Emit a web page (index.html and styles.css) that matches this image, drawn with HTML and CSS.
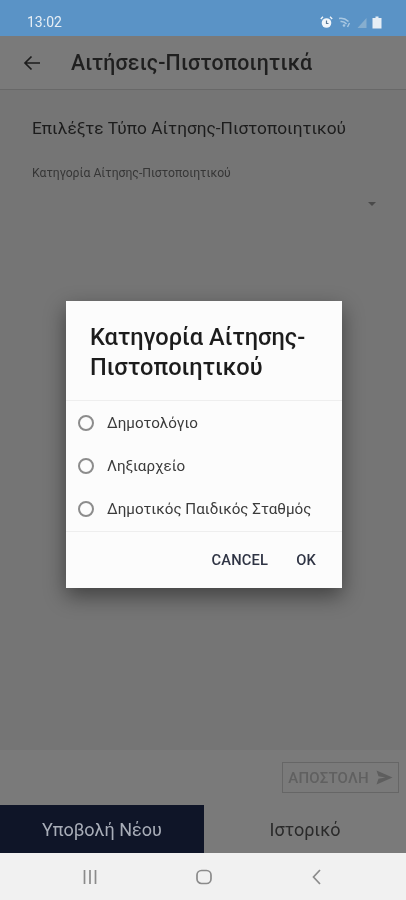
FILE: index.html
```html
<!DOCTYPE html>
<html lang="el">
<head>
    <meta charset="UTF-8">
    <meta name="viewport" content="width=device-width, initial-scale=1.0">
    <title>Αιτήσεις-Πιστοποιητικά</title>
    <link rel="stylesheet" href="styles.css">
</head>
<body>

    <!-- Status bar -->
    <div class="status-bar">
        <span class="status-time">13:02</span>
        <div class="status-icons">
            <svg width="13" height="13" viewBox="0 0 13 13"><circle cx="6.5" cy="7" r="4.8" fill="#f2f6fa"/><path d="M6.5 4.5V7.5H8.5" stroke="#5b7a96" stroke-width="1.2" fill="none"/><path d="M0.8 3L3 0.8M12.2 3L10 0.8" stroke="#f2f6fa" stroke-width="1.4"/></svg>
            <svg width="14" height="13" viewBox="0 0 14 13"><path d="M1 2.5Q6 1.5 10.5 5.5M2.5 5.5Q6 5 8.5 8" stroke="#a9c8e2" stroke-width="1.6" fill="none"/><circle cx="6" cy="9.5" r="1.3" fill="#a9c8e2"/><path d="M11.5 7L9.5 11" stroke="#a9c8e2" stroke-width="1.4"/></svg>
            <svg width="10" height="13" viewBox="0 0 10 13"><path d="M9.5 2V12H0.5Z" fill="#86aecf"/></svg>
            <svg width="10" height="13" viewBox="0 0 10 13"><path d="M3.5 0.5H6.5V2H9.5V12.5H0.5V2H3.5Z" fill="#e6eef5"/></svg>
        </div>
    </div>

    <div class="app">
        <!-- Toolbar -->
        <header class="toolbar">
            <svg class="back-icon" width="20" height="20" viewBox="0 0 20 20"><path d="M18 10H3M9.5 3.5L3 10L9.5 16.5" stroke="#1d1d1d" stroke-width="1.7" fill="none"/></svg>
            <h1>Αιτήσεις-Πιστοποιητικά</h1>
        </header>

        <!-- Form -->
        <main class="content">
            <h2>Επιλέξτε Τύπο Αίτησης-Πιστοποιητικού</h2>
            <label class="field-label">Κατηγορία Αίτησης-Πιστοποιητικού</label>
            <div class="select-row"><span class="select-arrow"></span></div>
        </main>

        <div class="send-bar">
            <div class="send-btn">
                <span>ΑΠΟΣΤΟΛΗ</span>
                <svg width="17" height="15" viewBox="0 0 17 15"><path d="M0.5 0.5L16.5 7.5L0.5 14.5L2.5 8.8L9.5 7.5L2.5 6.2Z" fill="#5e5e5e"/></svg>
            </div>
        </div>

        <!-- Tabs -->
        <div class="tabs">
            <div class="tab tab-active">Υποβολή Νέου</div>
            <div class="tab">Ιστορικό</div>
        </div>

        <!-- Dialog -->
        <div class="dialog-layer">
            <div class="dialog">
                <div class="dialog-title">Κατηγορία Αίτησης-Πιστοποιητικού</div>
                <div class="dialog-list">
                    <div class="radio-row"><span class="radio"></span>Δημοτολόγιο</div>
                    <div class="radio-row"><span class="radio"></span>Ληξιαρχείο</div>
                    <div class="radio-row"><span class="radio"></span>Δημοτικός Παιδικός Σταθμός</div>
                </div>
                <div class="dialog-actions">
                    <span>CANCEL</span>
                    <span>OK</span>
                </div>
            </div>
        </div>
    </div>

    <!-- System navigation -->
    <div class="sys-nav">
        <svg width="16" height="16" viewBox="0 0 16 16"><path d="M2.5 1V15M8 1V15M13.5 1V15" stroke="#8b8b8b" stroke-width="1.7"/></svg>
        <svg width="16" height="16" viewBox="0 0 16 16"><rect x="1" y="1.5" width="14" height="13" rx="4.5" stroke="#8b8b8b" stroke-width="1.7" fill="none"/></svg>
        <svg width="16" height="16" viewBox="0 0 16 16"><path d="M11 1L4.5 8L11 15" stroke="#8b8b8b" stroke-width="1.7" fill="none"/></svg>
    </div>

</body>
</html>
```

FILE: styles.css
```css
* {
    box-sizing: border-box;
}
html {
    background-color: #757575;
}
body {
    font-family: 'Roboto', 'Noto Sans', sans-serif;
    margin: 0;
    width: 406px;
    height: 900px;
    display: flex;
    flex-direction: column;
    overflow: hidden;
    background-color: #757575;
    filter: blur(0.6px); /* the reference is a soft, upscaled capture */
}
.status-bar {
    height: 36px;
    flex: none;
    background-color: #5a93c6;
    display: flex;
    align-items: center;
    justify-content: space-between;
    padding: 14px 24px 6px 27px;
    color: #e6eef5;
    font-size: 14px;
}
.status-icons {
    display: flex;
    align-items: center;
    gap: 5px;
}
.app {
    flex: 1;
    position: relative;
    display: flex;
    flex-direction: column;
    min-height: 0;
}
.toolbar {
    height: 54px;
    flex: none;
    display: flex;
    align-items: center;
    padding-left: 22px;
    background-color: #7a7a7a;
    border-bottom: 1px solid #686868;
}
.toolbar h1 {
    margin: 0 0 0 29px;
    font-size: 21.3px;
    font-weight: 500;
    color: #1f1f1f;
    letter-spacing: 0.2px;
}
.content {
    flex: 1;
    padding: 28px 32px 0;
}
.content h2 {
    margin: 0;
    font-size: 17.3px;
    font-weight: 400;
    color: #1c1c1c;
}
.field-label {
    display: block;
    margin-top: 28px;
    font-size: 12.2px;
    color: #363636;
}
.select-row {
    display: flex;
    justify-content: flex-end;
    padding: 22px 0 0;
    margin-right: -2px;
}
.select-arrow {
    width: 0;
    height: 0;
    border-left: 4px solid transparent;
    border-right: 4px solid transparent;
    border-top: 4px solid #4a4a4a;
}
.send-bar {
    height: 55px;
    flex: none;
    display: flex;
    align-items: flex-start;
    justify-content: flex-end;
    padding: 12px 7px 0 0;
    background-color: #7a7a7a;
}
.send-btn {
    width: 117px;
    height: 31px;
    border: 1px solid #666;
    display: flex;
    align-items: center;
    justify-content: center;
    gap: 7px;
    font-size: 15px;
    font-weight: 500;
    color: #606060;
    letter-spacing: 0.2px;
}
.tabs {
    height: 48px;
    flex: none;
    display: flex;
    background-color: #7a7a7a;
}
.tab {
    flex: 1;
    display: flex;
    align-items: center;
    justify-content: center;
    font-size: 18px;
    color: #2a2a2a;
}
.tab-active {
    flex: none;
    width: 204px;
    background-color: #0f1528;
    color: #a8adb8;
}
.dialog-layer {
    position: absolute;
    inset: 0;
    display: flex;
    align-items: center;
    justify-content: center;
}
.dialog {
    width: 276px;
    height: 287px;
    background-color: #fcfcfc;
    box-shadow: 0 8px 20px rgba(0, 0, 0, 0.45);
    display: flex;
    flex-direction: column;
    transform: translateX(1px);
}
.dialog-title {
    height: 100px;
    flex: none;
    padding: 21px 24px 0;
    font-size: 23.6px;
    line-height: 30px;
    font-weight: 500;
    color: #1c1c1c;
    border-bottom: 1px solid #eeeeee;
}
.dialog-list {
    height: 131px;
    flex: none;
    padding: 0 0 0 12px;
    display: flex;
    flex-direction: column;
    justify-content: center;
    border-bottom: 1px solid #eeeeee;
}
.radio-row {
    height: 43.5px;
    display: flex;
    align-items: center;
    font-size: 15.2px;
    color: #3b3b3b;
}
.radio {
    width: 16px;
    height: 16px;
    border: 2px solid #8c8c8c;
    border-radius: 50%;
    margin-right: 13px;
}
.dialog-actions {
    flex: 1;
    display: flex;
    align-items: center;
    justify-content: flex-end;
    gap: 28px;
    padding: 0 26px 0 0;
    font-size: 14.7px;
    font-weight: 500;
    color: #2f3444;
    letter-spacing: 0.2px;
}
.sys-nav {
    height: 47px;
    flex: none;
    background-color: #f1f1f1;
    display: flex;
    align-items: center;
    justify-content: space-between;
    padding: 0 81px 0 82px;
}
```
